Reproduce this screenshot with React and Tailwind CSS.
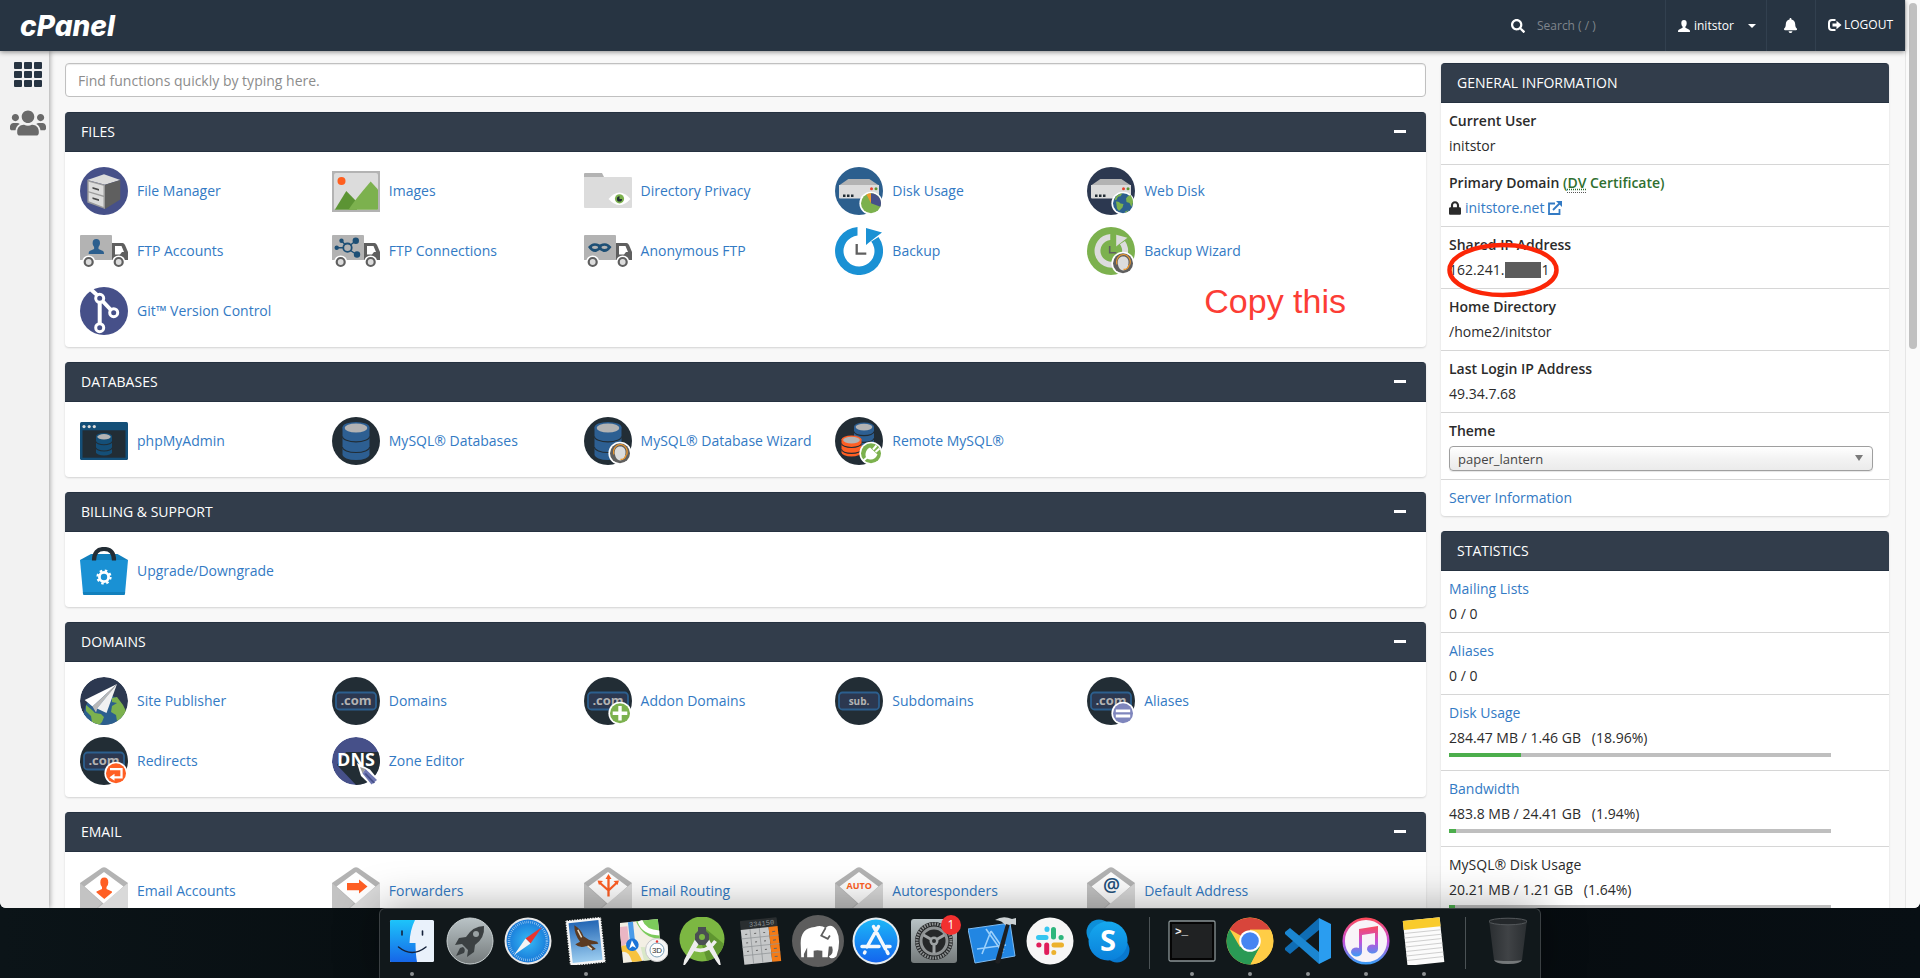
import { useState } from "react"
import { FaBell, FaLock, FaSearch, FaUsers } from "react-icons/fa"

/* ---------- shared icon parts ---------- */

function Svg({ children, className = "size-12 shrink-0" }) {
  return (
    <svg viewBox="0 0 48 48" className={className} aria-hidden="true">
      {children}
    </svg>
  )
}

function Disc({ fill }) {
  return <circle cx="24" cy="24" r="24" fill={fill} />
}

function Cylinder({ x = 10.5, y = 5, w = 27, h = 38, color = "#2d5f92", gap = "#222d35" }) {
  const ry = w * 0.2
  const cx = x + w / 2
  const line = (at) => `M${x} ${y + h * at}a${w / 2} ${ry} 0 0 0 ${w} 0`
  return (
    <g>
      <path d={`M${x} ${y + ry}v${h - 2 * ry}a${w / 2} ${ry} 0 0 0 ${w} 0v-${h - 2 * ry}z`} fill={color} />
      <ellipse cx={cx} cy={y + ry} rx={w / 2} ry={ry} fill={color} />
      <ellipse cx={cx} cy={y + ry + 0.6} rx={w * 0.42} ry={ry * 0.85} fill="#b3b3b3" />
      <path d={line(0.38)} fill="none" stroke={gap} strokeWidth="1.1" />
      <path d={line(0.66)} fill="none" stroke={gap} strokeWidth="1.1" />
    </g>
  )
}

function Badge({ fill, children }) {
  return (
    <g>
      <circle cx="36" cy="36.3" r="11.6" fill="#fff" />
      <circle cx="36" cy="36.3" r="10" fill={fill} />
      {children}
    </g>
  )
}

function WizardBadge() {
  return (
    <Badge fill="#5f5f5f">
      <path d="M30 37.500a6.800 7.500 0 1 1 12.600 .5" fill="none" stroke="#f0992c" strokeWidth="1.1" />
      <path d="M36.200 29.500c3.500 0 5.300 2.500 5.300 5.500 0 4.500-2 8.500-5.300 8.500s-5.500-4-5.500-8.500c0-3 2-5.500 5.500-5.500z" fill="#dcdcdc" />
      <path d="M42 38c-.5 3-2.500 4.500-5.500 4.500" fill="none" stroke="#f0992c" strokeWidth="1.4" />
    </Badge>
  )
}

function Server() {
  return (
    <g>
      <path d="M13.300 12H34.300L44 18.500H4z" fill="#b3b3b3" />
      <path d="M4 18H44V30.500q0 1-1 1H5q-1 0-1-1z" fill="#dcdcdc" />
      <path d="M8 27.500h2.500v2.500H8zM12 27.500h2.500v2.500H12zM16 27.500h2.500v2.500H16z" fill="#222d35" />
      <circle cx="36.500" cy="21.800" r="1.500" fill="#e8412c" />
      <circle cx="41" cy="21.800" r="1.500" fill="#5c9434" />
    </g>
  )
}

function Truck({ children }) {
  return (
    <Svg>
      <path d="M1 8H31q1 0 1 1V33H0V9q0-1 1-1z" fill="#b3b3b3" />
      <path d="M32 16H42.500Q44 16 45 18L48 25V33H32z" fill="#5f5f5f" />
      <path d="M35 19H41.500L44 25H42L40 27.500H35z" fill="#fff" />
      <circle cx="8.700" cy="35" r="6.600" fill="#fff" />
      <circle cx="38.700" cy="35" r="6.600" fill="#fff" />
      <circle cx="8.700" cy="35" r="4" fill="#dcdcdc" stroke="#5f5f5f" strokeWidth="2.200" />
      <circle cx="38.700" cy="35" r="4" fill="#dcdcdc" stroke="#5f5f5f" strokeWidth="2.200" />
      {children}
    </Svg>
  )
}

function BackupArrow({ color, hand }) {
  return (
    <g>
      <path d="M22.500 0.100V8.600A15.500 15.500 0 1 0 36.300 14.600L43.500 10A24 24 0 1 1 22.500 .1z" fill={color} />
      <path d="M31 1L47 5.500L41 10L34 15.500L31 18z" fill={color} />
      <path d="M21.700 17V26.700H31.300" fill="none" stroke={hand} strokeWidth="2.300" />
    </g>
  )
}

function DomainBox({ label = ".com", size = 13 }) {
  return (
    <g>
      <Disc fill="#222d35" />
      <rect x="4" y="15.500" width="40" height="17" rx="3.500" fill="#2c3850" stroke="#2c5f8e" strokeWidth="1.800" />
      <text x="24" y="28" fontSize={size} fontWeight="700" fontFamily="Open Sans, sans-serif" textAnchor="middle" fill="#b3b3b3">{label}</text>
    </g>
  )
}

function Envelope({ children }) {
  return (
    <Svg>
      <path d="M0 16L22 .8Q24-.5 26 .8L48 16V48H0z" fill="#b3b3b3" />
      <path d="M24 5L43.500 19.500L24 37L4.500 19.500z" fill="#fff" />
      <path d="M48 16V48H14L12 46z" fill="#d9d9d9" />
      <path d="M0 16L22 36L10 48H0z" fill="#c3c3c3" />
      {children}
    </Svg>
  )
}

/* ---------- feature icons ---------- */

const icons = {
  fileManager: (
    <Svg>
      <Disc fill="#465089" />
      <path d="M7.300 13L24 7.300L40.300 13L25 17.800z" fill="#dcdcdc" />
      <path d="M7.300 13L25 17.800V42L7.300 35.600z" fill="#9b9b9b" />
      <path d="M25 17.800L40.300 13V32.500L25 42z" fill="#5f5f5f" />
      <path d="M8.700 14.700L23.500 18.800V28.600L8.700 24.300zM8.700 25.500L23.500 29.900V40L8.700 34.300z" fill="#dcdcdc" />
      <path d="M12.500 20L19 22V23.700L12.500 21.700zM12.500 30.300L19 32.300V34L12.500 32z" fill="#4a4a4a" />
    </Svg>
  ),
  images: (
    <Svg>
      <path d="M0 4H48V45H0z" fill="#b3b3b3" />
      <rect x="2" y="6" width="44" height="37" rx="2" fill="#dcdcdc" />
      <circle cx="9.500" cy="14" r="4" fill="#ff5f1f" />
      <path d="M2.800 42.700L14.300 24L25 35V42.700z" fill="#5c9434" />
      <path d="M16.500 42.700Q22 34 38.700 14.500L46 22.500V41.500Q46 42.700 45 42.700z" fill="#7cb14e" />
    </Svg>
  ),
  directoryPrivacy: (
    <Svg>
      <path d="M0 11V7q0-1 1-1H18l2 4z" fill="#b3b3b3" />
      <path d="M0 10H47q1 0 1 1V40q0 1-1 1H1q-1 0-1-1z" fill="#dcdcdc" />
      <path d="M24.500 32Q30 25.500 35.500 25.500T46.500 32Q41 38 35.500 38T24.500 32z" fill="#fff" />
      <circle cx="35.500" cy="31.800" r="4.600" fill="#7cb14e" />
      <path d="M35.500 29.300a2.600 2.600 0 1 0 2.600 2.600h-2.600z" fill="#222d35" />
    </Svg>
  ),
  diskUsage: (
    <Svg>
      <Disc fill="#2c5f8e" />
      <Server />
      <Badge fill="#7cb14e">
        <path d="M36 36.300V26.300A10 10 0 0 1 45.400 39.700z" fill="#465089" />
        <path d="M36 36.300V26.300A10 10 0 0 0 31.500 27.400z" fill="#f0992c" />
      </Badge>
    </Svg>
  ),
  webDisk: (
    <Svg>
      <Disc fill="#2c3850" />
      <Server />
      <Badge fill="#2c5f8e">
        <path d="M29.500 29q3-2.500 6-2.700l-2 3-2.500.5-1.500 3-2 .5q.5-2.500 2-4.300zM29 34.500q3-.5 4.500 2l3 .5-1 3.500-3.500 3.500-2-2.500zM40.500 29.500l3-1.500q2.500 3.500 2.500 7.500l-1.500 4.500-2-4-3-1-.5-3.500zM38 44.500l4-1.500-3.500 3z" fill="#7cb14e" />
      </Badge>
    </Svg>
  ),
  ftpAccounts: (
    <Truck>
      <path d="M16.300 12q3.700 0 3.700 4.200 0 2.300-1.500 3.800v2l4.500 2q1 .6 1 3H8.600q0-2.400 1-3l4.500-2v-2q-1.500-1.500-1.500-3.800 0-4.200 3.700-4.200z" fill="#2c5f8e" />
    </Truck>
  ),
  ftpConnections: (
    <Truck>
      <g stroke="#1d4f75" strokeWidth="1.400" fill="none">
        <circle cx="15.500" cy="20.700" r="4.200" strokeWidth="1.800" />
        <path d="M4.700 20.700H11M9.700 14L13 17.500M18.500 18L23.500 14M18.500 23.500L24.500 27.500" />
      </g>
      <g fill="#1d4f75">
        <circle cx="9.500" cy="13.700" r="2.200" />
        <circle cx="23.800" cy="13.800" r="3.200" />
        <circle cx="4.700" cy="20.700" r="2.200" />
        <circle cx="25" cy="27.500" r="3.200" />
      </g>
    </Truck>
  ),
  anonymousFtp: (
    <Truck>
      <path d="M4 20Q8 15 13 16.500L15.700 17.500L18.500 16.500Q23.500 15 27.500 20Q24 25.500 19.500 25L15.700 23L12 25Q7.500 25.500 4 20z" fill="#1d4f75" />
      <ellipse cx="11" cy="20.300" rx="3" ry="1.600" fill="#b3b3b3" />
      <ellipse cx="20.500" cy="20.300" rx="3" ry="1.600" fill="#b3b3b3" />
    </Truck>
  ),
  backup: (
    <Svg>
      <BackupArrow color="#1a91d4" hand="#5f5f5f" />
    </Svg>
  ),
  backupWizard: (
    <Svg>
      <Disc fill="#7cb14e" />
      <g transform="translate(7.500 7) scale(.7)">
        <BackupArrow color="#dcdcdc" hand="#5f5f5f" />
      </g>
      <WizardBadge />
    </Svg>
  ),
  git: (
    <Svg>
      <Disc fill="#465089" />
      <g stroke="#fff" fill="none">
        <path d="M11 2.500L17 8M22.500 14L31 23M19.700 15V37" strokeWidth="4" />
        <circle cx="19.700" cy="11.300" r="4" strokeWidth="3" fill="#465089" />
        <circle cx="33.700" cy="25.700" r="4" strokeWidth="3" fill="#465089" />
        <circle cx="19.700" cy="40.700" r="4" strokeWidth="3" fill="#465089" />
      </g>
    </Svg>
  ),
  phpMyAdmin: (
    <Svg>
      <rect y="5" width="48" height="38" rx="1.500" fill="#144f78" />
      <rect x="2.500" y="13.300" width="43" height="27.400" fill="#222d35" />
      <circle cx="4" cy="9.600" r="1.600" fill="#dcdcdc" />
      <circle cx="9.200" cy="9.600" r="1.600" fill="#dcdcdc" />
      <circle cx="14.300" cy="9.600" r="1.600" fill="#dcdcdc" />
      <Cylinder x={16} y={16} w={16} h={22.500} color="#144f78" />
    </Svg>
  ),
  mysql: (
    <Svg>
      <Disc fill="#222d35" />
      <Cylinder />
    </Svg>
  ),
  mysqlWizard: (
    <Svg>
      <Disc fill="#222d35" />
      <Cylinder />
      <WizardBadge />
    </Svg>
  ),
  remoteMysql: (
    <Svg>
      <Disc fill="#222d35" />
      <Cylinder x={19} y={5.500} w={20} h={24} />
      <Cylinder x={6.500} y={18.500} w={20} h={21} color="#ff5f24" />
      <Badge fill="#7cb14e">
        <path d="M28 44L32 40.500M38 32.500L41.500 28.500M40.500 35L44.500 31.500" stroke="#fff" strokeWidth="2" />
        <path d="M35 30.500L42.500 37.500Q40 43 35 42.500T30.500 37Q31 32 35 30.500z" fill="#fff" />
      </Badge>
    </Svg>
  ),
  upgrade: (
    <Svg>
      <path d="M0 13L11 7H37.500L48 13z" fill="#1280bd" />
      <path d="M0 13H48L45 46.500Q44.800 48 43.500 48H4.500Q3.200 48 3 46.500z" fill="#1a91d4" />
      <path d="M2.900 45H45.100L45 46.500Q44.800 48 43.500 48H4.500Q3.200 48 3 46.500z" fill="#1280bd" />
      <path d="M14 13.500Q14 2 24 2T34 13.500" fill="none" stroke="#222d35" strokeWidth="4.200" />
      <circle cx="24" cy="30" r="4.600" fill="none" stroke="#fff" strokeWidth="2.800" />
      <circle cx="24" cy="30" r="6.500" fill="none" stroke="#fff" strokeWidth="2.200" strokeDasharray="2.500 2.605" />
    </Svg>
  ),
  sitePublisher: (
    <Svg>
      <clipPath id="publisherClip"><circle cx="24" cy="24" r="24" /></clipPath>
      <g clipPath="url(#publisherClip)">
        <Disc fill="#2c3850" />
        <circle cx="24" cy="37" r="20" fill="#2c5f8e" />
        <path d="M6 28l6 5 3 3 6 1 3 3-2 5-4 4-6-4-1-6-5-5zM32 21l5-1 6 8 3 6-4 9-5 1-1-6-5-3 1-6 5-3-5-1z" fill="#7cb14e" />
      </g>
      <path d="M37 7L4.700 23L12.500 29.500z" fill="#fff" />
      <path d="M37 7L12.500 29.500L16 35.500L17.500 31z" fill="#b9b9b9" />
      <path d="M37 7L17 31.500L26.500 36z" fill="#f1f1f1" />
    </Svg>
  ),
  domains: <Svg><DomainBox /></Svg>,
  addonDomains: (
    <Svg>
      <DomainBox />
      <Badge fill="#7cb14e">
        <path d="M36 29V43.600M28.700 36.300H43.300" stroke="#fff" strokeWidth="3.400" />
      </Badge>
    </Svg>
  ),
  subdomains: <Svg><DomainBox label="sub." size={10} /></Svg>,
  aliases: (
    <Svg>
      <DomainBox />
      <Badge fill="#7f86bd">
        <path d="M28.800 33.800H43.200M28.800 39H43.200" stroke="#fff" strokeWidth="2.800" />
      </Badge>
    </Svg>
  ),
  redirects: (
    <Svg>
      <DomainBox />
      <Badge fill="#ff5f24">
        <path d="M30 32.200H41.500V40.300H34" fill="none" stroke="#fff" strokeWidth="2.300" />
        <path d="M29.500 40.300L34.500 36.800V43.800z" fill="#fff" />
      </Badge>
    </Svg>
  ),
  zoneEditor: (
    <Svg>
      <clipPath id="zoneClip"><circle cx="24" cy="24" r="24" /></clipPath>
      <g clipPath="url(#zoneClip)">
        <Disc fill="#465089" />
        <path d="M5 28L14 15H48V50H26z" fill="#222d35" />
      </g>
      <text x="24" y="28.500" fontSize="18" fontWeight="700" fontFamily="Open Sans, sans-serif" textAnchor="middle" fill="#fff">DNS</text>
      <path d="M25 26L38 32.500L46.500 43L39.500 49L29 39z" fill="#fff" />
      <path d="M28 30L33.500 32L30.500 36.500z" fill="#9a9a9a" />
      <path d="M33.500 32L45 43L39.500 47.500L30.500 36.500z" fill="#6f77b2" />
      <path d="M34 36L43 45.500L41.500 46.500L32.500 37z" fill="#465089" />
    </Svg>
  ),
  emailAccounts: (
    <Envelope>
      <path d="M24.300 10.500q4 0 4 5 0 3-1.800 4.500v2l5.500 2.500v1L24.300 32L16.500 25.500v-1l5.500-2.500v-2q-1.700-1.500-1.700-4.500 0-5 4-5z" fill="#ff5f24" />
    </Envelope>
  ),
  forwarders: (
    <Envelope>
      <path d="M15 16H27V12.500L35.500 19.500L27 26.500V23.300H15z" fill="#ff5f24" />
    </Envelope>
  ),
  emailRouting: (
    <Envelope>
      <path d="M24.500 29.500V10M15.500 15.500L24.500 23.500M33 15.500L24.500 23.500" fill="none" stroke="#ff5f24" strokeWidth="2.300" />
      <path d="M24.500 7L27.500 12H21.500zM13.500 13.500L19 14L15 18zM35 13.500L29.500 14L33.500 18z" fill="#ff5f24" />
    </Envelope>
  ),
  autoresponders: (
    <Envelope>
      <text x="24.300" y="22" fontSize="9" fontWeight="700" fontFamily="Open Sans, sans-serif" textAnchor="middle" fill="#ff5f24">AUTO</text>
    </Envelope>
  ),
  defaultAddress: (
    <Envelope>
      <text x="24.500" y="24.500" fontSize="19" fontWeight="600" fontFamily="Open Sans, sans-serif" textAnchor="middle" fill="#24527d">@</text>
    </Envelope>
  ),
}

/* ---------- dock icons ---------- */

const dockIcons = {
  Finder: (
    <>
      <rect x="2" y="3" width="44" height="42" rx="1.500" fill="#e9f1fb" />
      <path d="M3.500 3H27Q22 13 21.500 26H27.500Q27.500 37 29 45H3.500Q2 45 2 43.500V4.500Q2 3 3.500 3z" fill="url(#finderBlue)" />
      <path d="M14 14V18M34.500 14V18" stroke="#14213a" strokeWidth="1.600" strokeLinecap="round" />
      <path d="M10.500 30Q24 41 38 30" fill="none" stroke="#14213a" strokeWidth="1.500" strokeLinecap="round" />
    </>
  ),
  Launchpad: (
    <>
      <circle cx="24" cy="24" r="23" fill="url(#silver)" stroke="#c9d0d1" strokeWidth="1" />
      <path d="M38 9Q27 9 20 20L13 21L9 28L16 27L22 33L21 40L28 35L29 28Q39 21 38 9z" fill="#3b4042" />
      <circle cx="30" cy="17" r="3" fill="#99a1a3" />
      <path d="M14 31L10 39L18 36Q20 32 17 30z" fill="#3b4042" />
    </>
  ),
  Safari: (
    <>
      <circle cx="24" cy="24" r="23.500" fill="#e8e8e8" />
      <circle cx="24" cy="24" r="21.500" fill="url(#safariBlue)" />
      <circle cx="24" cy="24" r="19" fill="none" stroke="#d5ecfa" strokeWidth="2.500" strokeDasharray=".5 1.490" />
      <path d="M38 10L26.500 26.500L21.500 21.500z" fill="#e8352f" />
      <path d="M10 38L26.500 26.500L21.500 21.500z" fill="#f4f4f4" />
    </>
  ),
  Mail: (
    <g transform="rotate(-6 24 24)">
      <rect x="5.500" y="1.500" width="36" height="46" fill="#f5f5f5" stroke="#111719" strokeWidth="1.500" strokeDasharray="1.200 1.400" />
      <rect x="8.500" y="4.500" width="30" height="40" fill="url(#stampSky)" />
      <path d="M14 7Q20 11 22 19L27 23L35 26L36 28L28 28L33 33L29 34L24 29Q17 31 13 26L18 24Q13 16 14 7z" fill="#5b3a22" />
      <path d="M17 12L20 20M25 29L29 33" stroke="#e9dcc6" strokeWidth="1.500" />
    </g>
  ),
  Maps: (
    <>
      <g transform="rotate(-6 20 24)">
        <rect x="1" y="4" width="39" height="40" fill="#f3efe4" />
        <path d="M18 4H40V24Q24 22 18 4z" fill="#7ccb5c" />
        <path d="M1 8H9V24L1 28z" fill="#eab6c4" />
        <path d="M1 27Q14 24 20 44H10Q8 32 1 33z" fill="#f8c33e" />
        <path d="M22 4Q25 16 40 18" fill="none" stroke="#fff" strokeWidth="5" />
        <path d="M10 4H15V26H10z" fill="#4a9be8" />
        <path d="M20 30L40 33V44H22z" fill="#d9e8c8" />
        <circle cx="12" cy="27" r="6.300" fill="#1b74d8" />
        <path d="M12 22.500L15.500 30.500L12 28.500L8.500 30.500z" fill="#fff" />
      </g>
      <circle cx="37" cy="33" r="11.500" fill="#f6f6f6" stroke="#c8c8c8" />
      <circle cx="37" cy="33" r="7" fill="#fff" stroke="#7aa0b8" />
      <text x="37" y="36" fontSize="8" fontFamily="Liberation Sans, sans-serif" textAnchor="middle" fill="#333">3D</text>
      <circle cx="37" cy="24.500" r="1.200" fill="#e8352f" />
    </>
  ),
  "Android Studio": (
    <>
      <circle cx="24" cy="22" r="22.500" fill="#7cb742" />
      <path d="M28 12L46 27Q42 41 29 44L24 28z" fill="#5f9530" />
      <path d="M21 25L9 44L6 48L7 43L18 22zM27 25L39 44L42 48L41 43L30 22z" fill="#eee" stroke="#eee" strokeWidth="1.500" />
      <path d="M13 31Q28 38 37.500 24" fill="none" stroke="#eee" strokeWidth="3.500" />
      <path d="M20 10H28V14L31 17V23L27 28H21L17 23V17L20 14z" fill="#4a4f52" />
      <circle cx="24" cy="20" r="3" fill="#7cb742" />
    </>
  ),
  Calculator: (
    <g transform="rotate(-6 24 24)">
      <rect x="6" y="2" width="37" height="44" rx="1" fill="#2a2e30" />
      <text x="40" y="9" fontSize="7" fontFamily="Liberation Mono, monospace" textAnchor="end" fill="#8a9295">334150</text>
      <rect x="6" y="11" width="28" height="35" fill="#c6c8c9" />
      <rect x="34" y="11" width="9" height="35" fill="#f47b16" />
      <path d="M6 20H43M6 28.500H43M6 37H43M15.300 11V46M24.600 11V46" stroke="#8f9395" strokeWidth=".7" />
      <path d="M10 16h2M19 16h2M28 16h2M10 24.500h2M19 24.500h2M28 24.500h2M10 33h2M19 33h2M28 33h2M37 16h3M37 24.500h3M37 33h3M37 41h3" stroke="#666" />
    </g>
  ),
  MAMP: (
    <>
      <circle cx="24" cy="24" r="24" fill="#5d5d5d" />
      <path d="M8 26Q8 12 21 11Q27 9 31 12Q36 7 41 14Q46 24 41 38Q36 42 34 38Q39 36 37 29L34 29L33 39H28V33Q23 32 20 33V39H14V30L11 36V39H8.500z" fill="#fff" />
      <path d="M31 12L27 19L33 22L35 19" fill="none" stroke="#5d5d5d" strokeWidth="1.600" />
    </>
  ),
  "App Store": (
    <>
      <circle cx="24" cy="24" r="23.500" fill="#e6ecf0" />
      <circle cx="24" cy="24" r="21.500" fill="url(#storeBlue)" />
      <g stroke="#f4f8fc" strokeWidth="3.500" strokeLinecap="round" fill="none">
        <path d="M21.500 9.500L33.500 32M26.500 9.500L15 30M10 29.500H27M34 29.500H38M13 35L12.500 36M35 34.500L36 36.500" />
      </g>
    </>
  ),
  "System Preferences": (
    <>
      <rect x="1" y="2" width="46" height="44" rx="3" fill="url(#silver)" />
      <circle cx="24" cy="24" r="19" fill="#262829" />
      <circle cx="24" cy="24" r="17" fill="none" stroke="#8f9394" strokeWidth="3" strokeDasharray="1.500 1.170" />
      <circle cx="24" cy="24" r="13" fill="none" stroke="#8f9394" strokeWidth="3" />
      <path d="M24 24V36M24 24L13.500 18M24 24L34.500 18" stroke="#9ea2a3" strokeWidth="3" />
      <circle cx="24" cy="24" r="4.500" fill="#9ea2a3" />
      <circle cx="24" cy="24" r="2" fill="#2b2d2e" />
    </>
  ),
  Xcode: (
    <>
      <path d="M0 12L42 6L47 39L7 46z" fill="#2286e2" stroke="#7dbbf2" />
      <path d="M23 14L14 37M23 14L36 33M9 32L38 28M18 12L35 36" stroke="#9bd0fb" strokeWidth="1.600" fill="none" />
      <path d="M27 3Q35-2 44 2L48 1V8L44 7L38 9Q34 3 27 3z" fill="#ccd2d4" />
      <path d="M38 7L41.500 8L32 46Q29 48 27 45z" fill="#1d1f21" />
    </>
  ),
  Slack: (
    <>
      <circle cx="24" cy="24" r="23.500" fill="#f6f6f6" />
      <g strokeWidth="5" strokeLinecap="round">
        <path d="M12.500 20.500H20M21 12V12.500" stroke="#36c5f0" />
        <path d="M27.500 12.500V20M35 20.500H35.200" stroke="#2eb67d" />
        <path d="M28 28H35.500M27.800 35.500V35.600" stroke="#ecb22e" />
        <path d="M20.700 28V35.500M12.800 28H13" stroke="#e01e5a" />
      </g>
    </>
  ),
  Skype: (
    <>
      <circle cx="15" cy="15" r="12.500" fill="#0d8fd9" />
      <circle cx="33" cy="33" r="12.500" fill="#0878cf" />
      <circle cx="24" cy="24" r="19.500" fill="url(#skypeBlue)" />
      <text x="24" y="34" fontSize="29" fontWeight="700" fontFamily="Open Sans, sans-serif" textAnchor="middle" fill="#fff">S</text>
    </>
  ),
  Terminal: (
    <>
      <rect x="1" y="4" width="46" height="40" rx="1.500" fill="#050505" stroke="#8a9496" strokeWidth="1.300" />
      <rect x="4" y="7" width="40" height="34" fill="#202223" />
      <text x="7" y="18" fontSize="11" fontWeight="700" fontFamily="Liberation Mono, monospace" fill="#f2f2f2">&gt;_</text>
    </>
  ),
  Chrome: (
    <>
      <circle cx="24" cy="24" r="23.500" fill="#ffcd46" />
      <path d="M24 24L3.600 12.300A23.500 23.500 0 0 1 44.400 12.800H24z" fill="#d8453b" />
      <path d="M3.600 12.300A23.500 23.500 0 0 0 24.500 47.500L34 30L24 24L14 30z" fill="#2a9a55" />
      <path d="M34 29.500L24.500 47.500A23.500 23.500 0 0 0 44.400 12.800H24z" fill="#ffcd46" />
      <circle cx="24" cy="24" r="10.800" fill="#fff" />
      <circle cx="24" cy="24" r="8.800" fill="#4585f2" />
    </>
  ),
  "Visual Studio Code": (
    <>
      <path d="M35 1L47 7V41L35 47z" fill="#2a9df0" />
      <path d="M35 1V13L6 37L1 33V31z" fill="#0f6db5" />
      <path d="M35 47V35L6 11L1 15V17z" fill="#1b86d1" />
    </>
  ),
  iTunes: (
    <>
      <circle cx="24" cy="24" r="22.300" fill="#f8f3f8" stroke="url(#tunes)" strokeWidth="2.500" />
      <path d="M17 12L36 9V32A5.500 4.500 0 1 1 33 28V16L20 18V35A5.500 4.500 0 1 1 17 31z" fill="url(#tunes)" />
    </>
  ),
  Notes: (
    <g transform="rotate(-6 24 24)">
      <rect x="5" y="2" width="37" height="45" fill="#fbfbfb" />
      <rect x="5" y="2" width="37" height="9" fill="#f9cb2c" />
      <path d="M5 14.500H42M5 19H42M5 23.500H42M5 28H42M5 32.500H42M5 37H42M5 41.500H42" stroke="#cfcfcf" />
    </g>
  ),
  Trash: (
    <>
      <path d="M5 3H43L38 43Q37 47 24 47T10 43z" fill="url(#bin)" />
      <ellipse cx="24" cy="4.500" rx="19" ry="3.300" fill="#24282b" stroke="#54585b" />
      <path d="M10 43Q12 47 24 47T38 43Q34 44 24 44T10 43z" fill="#74787a" />
    </>
  ),
}

function DockDefs() {
  return (
    <svg className="absolute size-0" aria-hidden="true">
      <defs>
        <linearGradient id="finderBlue" x2="0" y2="1"><stop stopColor="#1dc4fa" /><stop offset="1" stopColor="#1666e8" /></linearGradient>
        <linearGradient id="silver" x2="0" y2="1"><stop stopColor="#b9c3c6" /><stop offset="1" stopColor="#747a7b" /></linearGradient>
        <radialGradient id="safariBlue"><stop stopColor="#35b9f5" /><stop offset="1" stopColor="#1878d8" /></radialGradient>
        <linearGradient id="stampSky" x2="0" y2="1"><stop stopColor="#2467b5" /><stop offset="1" stopColor="#9ccdf0" /></linearGradient>
        <linearGradient id="storeBlue" x2="0" y2="1"><stop stopColor="#1cb6f8" /><stop offset="1" stopColor="#1465ee" /></linearGradient>
        <linearGradient id="skypeBlue" x2="0" y2="1"><stop stopColor="#16a9ef" /><stop offset="1" stopColor="#0a80da" /></linearGradient>
        <linearGradient id="tunes" x2="0" y2="1"><stop stopColor="#fb4a5c" /><stop offset=".5" stopColor="#c650d8" /><stop offset="1" stopColor="#3c9bf5" /></linearGradient>
        <linearGradient id="bin"><stop stopColor="#2a2e31" /><stop offset=".5" stopColor="#404346" /><stop offset="1" stopColor="#2a2e31" /></linearGradient>
      </defs>
    </svg>
  )
}

/* ---------- data ---------- */

const groups = [
  { title: "Files", note: "Copy this", items: [
    ["File Manager", "fileManager"], ["Images", "images"], ["Directory Privacy", "directoryPrivacy"],
    ["Disk Usage", "diskUsage"], ["Web Disk", "webDisk"], ["FTP Accounts", "ftpAccounts"],
    ["FTP Connections", "ftpConnections"], ["Anonymous FTP", "anonymousFtp"], ["Backup", "backup"],
    ["Backup Wizard", "backupWizard"], ["Git™ Version Control", "git"],
  ] },
  { title: "Databases", items: [
    ["phpMyAdmin", "phpMyAdmin"], ["MySQL® Databases", "mysql"],
    ["MySQL® Database Wizard", "mysqlWizard"], ["Remote MySQL®", "remoteMysql"],
  ] },
  { title: "Billing & Support", items: [["Upgrade/Downgrade", "upgrade"]] },
  { title: "Domains", items: [
    ["Site Publisher", "sitePublisher"], ["Domains", "domains"], ["Addon Domains", "addonDomains"],
    ["Subdomains", "subdomains"], ["Aliases", "aliases"], ["Redirects", "redirects"], ["Zone Editor", "zoneEditor"],
  ] },
  { title: "Email", items: [
    ["Email Accounts", "emailAccounts"], ["Forwarders", "forwarders"], ["Email Routing", "emailRouting"],
    ["Autoresponders", "autoresponders"], ["Default Address", "defaultAddress"],
  ] },
]

const stats = [
  { label: "Mailing Lists", value: "0 / 0", link: true },
  { label: "Aliases", value: "0 / 0", link: true },
  { label: "Disk Usage", value: "284.47 MB / 1.46 GB", percent: 18.96, link: true },
  { label: "Bandwidth", value: "483.8 MB / 24.41 GB", percent: 1.94, link: true },
  { label: "MySQL® Disk Usage", value: "20.21 MB / 1.21 GB", percent: 1.64 },
]

const dockSections = [
  ["Finder", "Launchpad", "Safari", "Mail", "Maps", "Android Studio", "Calculator", "MAMP", "App Store", "System Preferences", "Xcode", "Slack", "Skype"],
  ["Terminal", "Chrome", "Visual Studio Code", "iTunes", "Notes"],
  ["Trash"],
]
const running = ["Finder", "Mail", "Terminal", "Chrome", "Visual Studio Code", "iTunes", "Notes"]

/* ---------- layout ---------- */

function Header() {
  return (
    <header className="relative z-20 flex h-[51px] shrink-0 items-stretch bg-[#273442] text-white shadow-[0_1px_5px_rgba(0,0,0,0.45)]">
      <a href="#home" className="flex items-center pl-5 font-[Inter,sans-serif] text-[28px] leading-none font-extrabold italic">cPanel</a>
      <div className="ml-auto flex items-center text-xs">
        <label className="flex h-full items-center gap-3 pr-3">
          <FaSearch className="size-[14px]" />
          <input aria-label="Search" placeholder="Search ( / )" className="w-[116px] outline-none placeholder:text-[#7f858c]" />
        </label>
        <button className="flex h-full w-[101px] items-center border-l border-[#32404f] pl-3">
          <svg viewBox="0 0 12 12" className="mr-1 size-3 fill-current"><path d="M6 0q2.700 0 2.700 3.200 0 2.200-1.300 3.500v1q3 1.300 4.200 2.200.4.500.4 2.100H0q0-1.600.4-2.100Q1.600 9 4.600 7.700v-1Q3.300 5.400 3.300 3.200 3.300 0 6 0z" /></svg>
          initstor
          <span className="ml-[14px] border-x-4 border-t-4 border-x-transparent border-t-white" />
        </button>
        <button aria-label="Notifications" className="flex h-full w-[49px] items-center justify-center border-l border-[#32404f]">
          <FaBell className="size-[15px]" />
        </button>
        <a href="#logout" className="flex h-full items-center gap-0.5 border-l border-[#32404f] px-3 pb-0.5">
          <svg viewBox="0 0 14 12" className="h-3 w-[14px]">
            <path d="M7.500 1H4Q1 1 1 4v4q0 3 3 3h3.500" fill="none" stroke="currentColor" strokeWidth="2" />
            <path d="M4.500 4.600H8.500V1.800L13.500 6L8.500 10.200V7.400H4.500z" fill="currentColor" />
          </svg>
          LOGOUT
        </a>
      </div>
    </header>
  )
}

function Sidebar() {
  return (
    <nav className="z-10 flex w-[49px] shrink-0 flex-col items-center gap-[18px] bg-[#f2f2f2] pt-[11px] pl-1.5 shadow-[1px_0_5px_rgba(0,0,0,0.35)]">
      <a href="#home" aria-label="Home" className="text-[#273442]">
        <svg viewBox="0 0 28 25" className="h-[25px] w-7 fill-current">
          {[0, 9, 18].map((y) => [0, 10, 20].map((x) => <rect key={`${x}-${y}`} x={x} y={y} width="8" height="7" rx="1" />))}
        </svg>
      </a>
      <a href="#users" aria-label="User Manager" className="text-[#6a6a6a]"><FaUsers className="size-9" /></a>
    </nav>
  )
}

function PanelTitle({ children }) {
  return (
    <div className="flex h-10 items-center justify-between rounded-t border-y border-[#253140] bg-[#323d4b] pr-5 pl-4 text-white">
      {children}
    </div>
  )
}

const panelClass = "rounded bg-white shadow-[0_1px_2px_rgba(0,0,0,0.15)]"

function Group({ group }) {
  const [open, setOpen] = useState(true)
  return (
    <section className={`relative ${panelClass}`}>
      <PanelTitle>
        <h2 className="uppercase">{group.title}</h2>
        <button aria-label={`Toggle ${group.title}`} onClick={() => setOpen(!open)} className="flex h-6 items-center pb-px">
          <span className="h-[3px] w-3 bg-white" />
        </button>
      </PanelTitle>
      {open && (
        <ul className="flex flex-wrap gap-y-3 pt-[15px] pb-3">
          {group.items.map(([label, icon]) => (
            <li key={label} className="w-[18.5%] pl-[15px]">
              <a href="#feature" className="flex items-center gap-[9px] whitespace-nowrap text-[#337ac4]">
                {icons[icon]}
                {label}
              </a>
            </li>
          ))}
        </ul>
      )}
      {group.note && (
        <p className="absolute right-20 bottom-[26px] font-['Liberation_Sans',Arial,sans-serif] text-[34px] leading-10 text-[#fc3d35]">{group.note}</p>
      )}
    </section>
  )
}

function Row({ children, last }) {
  return (
    <div className={`relative pt-[5px] pr-4 pb-1.5 pl-2 leading-[25px] ${last ? "" : "border-b border-[#d6d6d6]"}`}>
      {children}
    </div>
  )
}

function GeneralInfo() {
  return (
    <section className={panelClass}>
      <PanelTitle><h2>GENERAL INFORMATION</h2></PanelTitle>
      <Row>
        <p className="font-semibold">Current User</p>
        <p>initstor</p>
      </Row>
      <Row>
        <p className="font-semibold">
          Primary Domain{" "}
          <span className="text-[#2f6f30]">(<abbr title="Domain Validated" className="border-b border-dotted border-[#555]">DV</abbr> Certificate)</span>
        </p>
        <p className="flex items-center gap-1">
          <FaLock className="h-[14px] w-3" />
          <a href="#site" className="flex items-center gap-1 text-[#337ac4]">
            initstore.net
            <svg viewBox="0 0 14 14" className="size-[14px]" fill="none" stroke="currentColor" strokeWidth="1.800">
              <path d="M7 2.500H1V13H11.500V8M5 9L12 2" />
              <path d="M8 0h6v6z" fill="currentColor" stroke="none" />
            </svg>
          </a>
        </p>
      </Row>
      <Row>
        <p className="font-semibold">Shared IP Address</p>
        <p className="flex items-center">
          162.241.
          <span className="ml-px h-4 w-9 bg-[#5c5c5c]" />
          1
        </p>
        <svg viewBox="0 0 112 56" className="absolute top-[15px] left-1.5 z-10 h-14 w-28" aria-hidden="true">
          <ellipse cx="56" cy="28" rx="53.500" ry="25" fill="none" stroke="#fb2607" strokeWidth="4.500" />
        </svg>
      </Row>
      <Row>
        <p className="font-semibold">Home Directory</p>
        <p>/home2/initstor</p>
      </Row>
      <Row>
        <p className="font-semibold">Last Login IP Address</p>
        <p>49.34.7.68</p>
      </Row>
      <Row>
        <label htmlFor="theme" className="block font-semibold">Theme</label>
        <div className="relative mt-[3px] mb-0.5">
          <select id="theme" className="block h-[25px] w-full appearance-none rounded border border-[#9f9f9f] bg-linear-to-b from-white via-[#f3f3f3] to-[#ebebeb] pl-2 text-[13px] text-[#444] shadow-[0_1px_1px_rgba(0,0,0,0.1)]">
            <option>paper_lantern</option>
          </select>
          <span className="pointer-events-none absolute top-[9px] right-2.5 border-x-4 border-t-6 border-x-transparent border-t-[#7a7a7a]" />
        </div>
      </Row>
      <Row last><a href="#server" className="text-[#337ac4]">Server Information</a></Row>
    </section>
  )
}

function Statistics() {
  return (
    <section className={panelClass}>
      <PanelTitle><h2>STATISTICS</h2></PanelTitle>
      {stats.map((s) => (
        <Row key={s.label}>
          <p>{s.link ? <a href="#stat" className="text-[#337ac4]">{s.label}</a> : s.label}</p>
          <p className="whitespace-pre">{s.value}{s.percent ? `   (${s.percent}%)` : ""}</p>
          {s.percent && (
            <div className="mt-[3px] mb-[7px] h-1 w-[90%] bg-[#bfbfbf]">
              <div className="h-full bg-[#4cae4c]" style={{ width: `${s.percent}%` }} />
            </div>
          )}
        </Row>
      ))}
    </section>
  )
}

function Dock() {
  return (
    <div className="relative z-30 mx-auto flex h-full w-max rounded-t-md border border-b-0 border-[#3b4043] bg-[#11181b] px-[3px] shadow-[0_0_44px_rgba(0,0,0,0.35)]">
      <DockDefs />
      {dockSections.map((names, i) => (
        <div key={names[0]} className="flex">
          {i > 0 && <span className="mx-[12px] mt-2 h-[52px] w-0.5 border-l border-[#4b5255]" />}
          {names.map((name) => (
            <button key={name} aria-label={name} className="relative flex w-[58px] flex-col items-center pt-[8px]">
              <Svg className={name === "MAMP" ? "-mt-0.5 size-[52px]" : "size-12"}>{dockIcons[name]}</Svg>
              {running.includes(name) && <span className="absolute bottom-0.5 size-1 rounded-full bg-[#8c9092]" />}
              {name === "System Preferences" && (
                <span className="absolute top-1.5 right-0.5 flex size-5 items-center justify-center rounded-full bg-[#f2302f] text-xs text-white">1</span>
              )}
            </button>
          ))}
        </div>
      ))}
    </div>
  )
}

export default function App() {
  return (
    <div className="flex h-screen flex-col overflow-hidden bg-[#060a0c] bg-linear-to-r from-[#0b1418] via-[#05080a] to-[#080f14] font-['Open_Sans',sans-serif] text-sm text-[#2b2b2b]">
      <div className="flex min-h-0 flex-1 overflow-hidden rounded-b-md bg-[#f8f8f8]">
        <div className="flex min-w-0 flex-1 flex-col">
          <Header />
          <div className="flex min-h-0 flex-1">
            <Sidebar />
            <div className="flex min-w-0 flex-1 items-start gap-[15px] pt-3 pr-4 pl-4">
              <main className="flex min-w-0 flex-1 flex-col gap-[15px]">
                <input
                  aria-label="Find functions"
                  placeholder="Find functions quickly by typing here."
                  className="h-[34px] w-full rounded border border-[#c0c0c0] bg-white px-3 shadow-[inset_0_1px_1px_rgba(0,0,0,0.08)] outline-none placeholder:text-[#8c8c8c]"
                />
                {groups.map((g) => <Group key={g.title} group={g} />)}
              </main>
              <aside className="flex w-md shrink-0 flex-col gap-[15px]">
                <GeneralInfo />
                <Statistics />
              </aside>
            </div>
          </div>
        </div>
        <div className="w-[15px] shrink-0 border-l border-[#e6e6e6] bg-[#fafafa] pt-[3px] pl-[3px]">
          <div className="h-[346px] w-2 rounded-full bg-[#c0c0c0]" />
        </div>
      </div>
      <div className="h-[70px] shrink-0">
        <Dock />
      </div>
    </div>
  )
}
